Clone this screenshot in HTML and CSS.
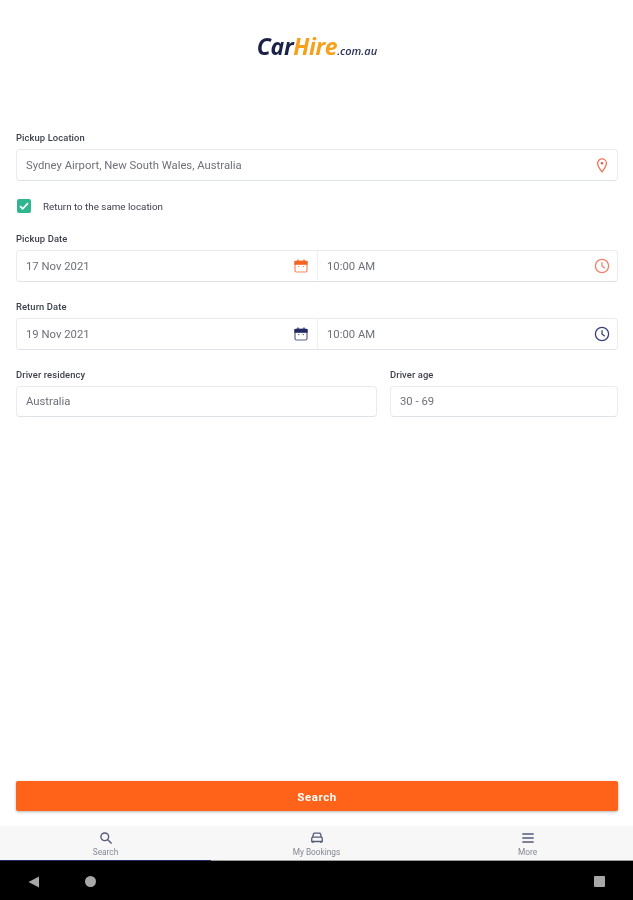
FILE: index.html
```html
<!DOCTYPE html>
<html lang="en">
<head>
  <meta charset="UTF-8" />
  <meta name="viewport" content="width=device-width, initial-scale=1.0"/>
  <title>CarHire Search</title>
  <link rel="stylesheet" href="styles.css">
</head>
<body>
  <div class="screen">

    <header class="logo-bar">
      <div class="logo"><span class="logo-car">Car</span><span class="logo-hire">Hire</span><span class="logo-tld">.com.au</span></div>
    </header>

    <!-- Search form -->
    <main class="search-form">
      <div class="label">Pickup Location</div>
      <div class="field">
        <span class="field-text">Sydney Airport, New South Wales, Australia</span>
        <svg class="icon" width="14" height="16" viewBox="0 0 14 16" fill="none" stroke="#f0745a" stroke-width="1.3">
          <path d="M7 14.8C4.6 11.9 2.6 9.4 2.6 6.3a4.4 4.4 0 0 1 8.8 0c0 3.1-2 5.6-4.4 8.5z"/>
          <circle cx="7" cy="6.2" r="1.2" fill="#e8553a" stroke="none"/>
        </svg>
      </div>

      <div class="same-location">
        <span class="checkbox">
          <svg width="14" height="14" viewBox="0 0 14 14" fill="none" stroke="#fff" stroke-width="1.7"><path d="M3 7.2l2.700 2.700L11 4.200"/></svg>
        </span>
        <span>Return to the same location</span>
      </div>

      <div class="label">Pickup Date</div>
      <div class="field">
        <div class="date-part">
          <span class="field-text">17 Nov 2021</span>
          <svg class="icon" width="14" height="14" viewBox="0 0 14 14" fill="none" stroke="#f9865a" stroke-width="1.2">
            <rect x="1" y="2" width="12" height="11" rx="1.5"/>
            <path d="M1 2.600h12v2.600H1z" fill="#f26522" stroke="#f26522"/>
            <path d="M4 0.600v2M10 0.600v2" stroke="#f26522"/>
            <path d="M4 7.600h1.400M8.600 7.600H10" stroke-width="1"/>
          </svg>
        </div>
        <div class="time-part">
          <span class="field-text">10:00 AM</span>
          <svg class="icon" width="16" height="16" viewBox="0 0 16 16" fill="none" stroke="#f0806a" stroke-width="1.3">
            <circle cx="8" cy="8" r="6.600"/>
            <path d="M8 4.200V8l2.800 2.200"/>
          </svg>
        </div>
      </div>

      <div class="label">Return Date</div>
      <div class="field">
        <div class="date-part">
          <span class="field-text">19 Nov 2021</span>
          <svg class="icon" width="14" height="14" viewBox="0 0 14 14" fill="none" stroke="#5a6088" stroke-width="1.2">
            <rect x="1" y="2" width="12" height="11" rx="1.5"/>
            <path d="M1 2.600h12v2.600H1z" fill="#232a63" stroke="#232a63"/>
            <path d="M4 0.600v2M10 0.600v2" stroke="#232a63"/>
            <path d="M4 7.600h1.400M8.600 7.600H10" stroke-width="1"/>
          </svg>
        </div>
        <div class="time-part">
          <span class="field-text">10:00 AM</span>
          <svg class="icon" width="16" height="16" viewBox="0 0 16 16" fill="none" stroke="#3a4178" stroke-width="1.3">
            <circle cx="8" cy="8" r="6.600"/>
            <path d="M8 4.200V8l2.800 2.200"/>
          </svg>
        </div>
      </div>

      <div class="driver-row">
        <div class="driver-col">
          <div class="label">Driver residency</div>
          <div class="field field-short"><span class="field-text">Australia</span></div>
        </div>
        <div class="age-col">
          <div class="label">Driver age</div>
          <div class="field field-short"><span class="field-text">30 - 69</span></div>
        </div>
      </div>
    </main>

    <div class="button-wrap">
      <button class="search-button">Search</button>
    </div>

    <!-- Bottom tabs -->
    <nav class="tabs">
      <div class="tab tab-active">
        <svg width="14" height="14" viewBox="0 0 16 16" fill="none" stroke="#555b78" stroke-width="1.6">
          <circle cx="6.600" cy="6.600" r="4.400"/>
          <path d="M10 10l4.400 4.400"/>
        </svg>
        <span>Search</span>
      </div>
      <div class="tab">
        <svg width="14" height="14" viewBox="0 0 16 16" fill="none" stroke="#555b78" stroke-width="1.5">
          <path d="M3 7l1-3.600c.2-.6.6-.9 1.200-.9h5.600c.6 0 1 .3 1.200.9L13 7"/>
          <path d="M2 8.200C2 7.500 2.500 7 3.200 7h9.600c.7 0 1.200.5 1.200 1.200V12H2z"/>
          <path d="M3.500 12v1.800M12.500 12v1.800"/>
        </svg>
        <span>My Bookings</span>
      </div>
      <div class="tab">
        <svg width="14" height="14" viewBox="0 0 16 16" fill="none" stroke="#555b78" stroke-width="1.6">
          <path d="M1.500 3.500h13M1.500 8h13M1.500 12.500h13"/>
        </svg>
        <span>More</span>
      </div>
    </nav>

    <!-- Android system bar -->
    <div class="system-bar">
      <div class="sys-left">
        <svg width="12" height="12" viewBox="0 0 12 12"><path d="M11 0.500v11L0.500 6z" fill="#a8a8a8"/></svg>
        <span class="sys-home"></span>
      </div>
      <span class="sys-recent"></span>
    </div>

  </div>
</body>
</html>
```

FILE: styles.css
```css
* {
  box-sizing: border-box;
}
body {
  margin: 0;
  font-family: Roboto, Arial, sans-serif;
  background-color: #fff;
}
.screen {
  display: flex;
  flex-direction: column;
  height: 900px;
  overflow: hidden;
  filter: blur(0.4px);
}
.logo-bar {
  display: flex;
  justify-content: center;
  height: 131px;
  padding: 32px 0 0 1px;
}
.logo {
  line-height: 28px;
  height: 28px;
  font-family: "Open Sans", Arial, sans-serif;
  font-style: italic;
  font-weight: 700;
  font-size: 23px;
  white-space: nowrap;
}
.logo-car {
  color: #1c2247;
  letter-spacing: -0.3px;
}
.logo-hire {
  color: #f7a11a;
  letter-spacing: -0.4px;
}
.logo-tld {
  color: #2c3358;
  font-size: 11px;
  font-weight: 600;
}
.search-form {
  flex: 1;
  padding: 0 15px 0 16px;
}
.label {
  height: 18px;
  line-height: 13px;
  font-size: 9.4px;
  font-weight: 500;
  color: #3b3f4a;
  letter-spacing: 0.1px;
}
.field {
  display: flex;
  align-items: center;
  height: 32px;
  padding: 0 8px 0 9px;
  background-color: #fff;
  border: 1px solid #e9ebee;
  border-bottom-color: #dfe2e8;
  border-radius: 4px;
}
.field-short {
  height: 31px;
}
.field-text {
  flex: 1;
  font-size: 11.3px;
  color: #6d7078;
}
.icon {
  flex-shrink: 0;
}
.date-part {
  display: flex;
  align-items: center;
  width: 292px;
  height: 100%;
  padding-right: 9px;
  border-right: 1px solid #eef0f2;
}
.time-part {
  display: flex;
  align-items: center;
  flex: 1;
  height: 100%;
  padding-left: 9px;
  margin-right: -1px;
}
.same-location {
  display: flex;
  align-items: center;
  gap: 12px;
  height: 14px;
  margin: 18px 0 19px 1px;
  font-size: 9.8px;
  color: #3b3f4a;
}
.checkbox {
  display: flex;
  width: 14px;
  height: 14px;
  border-radius: 2px;
  background-color: #2fb58f;
}
.search-form > .field + .label {
  margin-top: 18px;
}
.search-form > .same-location + .label {
  margin-top: 0;
}
.driver-row {
  display: flex;
  gap: 13px;
  margin-top: 18px;
}
.driver-col {
  width: 361px;
}
.age-col {
  flex: 1;
}
.button-wrap {
  padding: 0 15px 0 16px;
  margin-bottom: 15px;
}
.search-button {
  display: block;
  width: 100%;
  height: 30px;
  padding: 1px 0 0;
  border: none;
  border-radius: 2px;
  background-color: #ff6319;
  box-shadow: 0 1px 3px rgba(0, 0, 0, 0.3);
  color: #fff;
  font-family: Roboto, Arial, sans-serif;
  font-size: 11.5px;
  font-weight: 700;
  letter-spacing: 0.6px;
}
.tabs {
  display: flex;
  height: 35px;
  background-color: #f7f7f8;
}
.tab {
  flex: 1;
  display: flex;
  flex-direction: column;
  align-items: center;
  padding-top: 5px;
  font-size: 8.3px;
  line-height: 10px;
  color: #858891;
  border-bottom: 1px solid #9a9a9a;
}
.tab svg {
  margin-bottom: 2px;
}
.tab-active {
  border-bottom-color: #232a63;
}
.system-bar {
  display: flex;
  align-items: center;
  justify-content: space-between;
  height: 39px;
  padding: 2px 28px 0;
  background-color: #000;
}
.sys-left {
  display: flex;
  align-items: center;
  gap: 45px;
}
.sys-home {
  width: 11px;
  height: 11px;
  border-radius: 50%;
  background-color: #a8a8a8;
}
.sys-recent {
  width: 11px;
  height: 11px;
  border-radius: 1px;
  background-color: #a8a8a8;
}
```
